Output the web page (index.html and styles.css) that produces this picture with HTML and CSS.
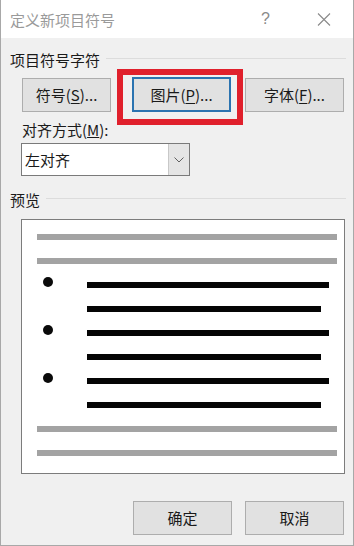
FILE: index.html
```html
<!DOCTYPE html>
<html lang="zh-CN">
<head>
    <meta charset="UTF-8">
    <meta name="viewport" content="width=device-width, initial-scale=1.0">
    <title>定义新项目符号</title>
    <link rel="stylesheet" href="styles.css">
</head>
<body>

<div class="dialog">
    <div class="title-bar">
        <span class="title">定义新项目符号</span>
        <span class="help">?</span>
        <svg class="close" width="14" height="13" viewBox="0 0 14 13">
            <path d="M1 0.5 L13 12.5 M13 0.5 L1 12.5" stroke="#8a8a8a" stroke-width="1.1" fill="none"/>
        </svg>
    </div>

    <div class="content">
        <div class="group-title">
            <span>项目符号字符</span>
            <span class="rule"></span>
        </div>

        <div class="button-row">
            <button class="btn btn-symbol">符号(<u>S</u>)...</button>
            <div class="highlight-wrap">
                <button class="btn btn-picture">图片(<u>P</u>)...</button>
                <!-- red annotation frame -->
                <div class="highlight"></div>
            </div>
            <button class="btn btn-font">字体(<u>F</u>)...</button>
        </div>

        <div class="field-label">对齐方式(<u>M</u>):</div>
        <div class="select">
            <span class="select-value">左对齐</span>
            <span class="select-arrow">
                <svg width="10" height="6" viewBox="0 0 10 6">
                    <path d="M0.5 0.5 L5 5 L9.5 0.5" stroke="#606060" stroke-width="1" fill="none"/>
                </svg>
            </span>
        </div>

        <div class="group-title preview-title">
            <span>预览</span>
            <span class="rule"></span>
        </div>

        <div class="preview">
            <div class="bar gray"></div>
            <div class="bar gray"></div>
            <div class="item"><span class="dot"></span><div class="bar black long"></div></div>
            <div class="item"><div class="bar black short"></div></div>
            <div class="item"><span class="dot"></span><div class="bar black long"></div></div>
            <div class="item"><div class="bar black short"></div></div>
            <div class="item"><span class="dot"></span><div class="bar black long"></div></div>
            <div class="item"><div class="bar black short"></div></div>
            <div class="bar gray"></div>
            <div class="bar gray"></div>
        </div>

        <div class="footer">
            <button class="btn btn-ok">确定</button>
            <button class="btn btn-cancel">取消</button>
        </div>
    </div>
</div>

</body>
</html>
```

FILE: styles.css
```css
body {
    margin: 0;
    padding: 0;
    background-color: #f0f0f0;
    font-family: "Noto Sans CJK SC", "Liberation Sans", sans-serif;
}

.dialog {
    width: 354px;
    height: 546px;
    box-sizing: border-box;
    border: 1px solid #a8a8a8;
    border-top: none;
    background-color: #f0f0f0;
}

.title-bar {
    height: 38px;
    background-color: white;
    display: flex;
    align-items: center;
    padding-left: 9px;
}

.title {
    font-size: 15px;
    color: #9a9a9a;
    flex: 1;
}

.help {
    font-size: 16px;
    color: #8a8a8a;
    margin-right: 47px;
    font-family: "Liberation Sans", sans-serif;
}

.close {
    margin-right: 22px;
}

.content {
    padding: 0 7px 0 9px;
    color: #1a1a1a;
    font-size: 15px;
}

.group-title {
    display: flex;
    align-items: center;
    height: 20px;
    line-height: 20px;
    margin-top: 12px;
}

.group-title .rule {
    flex: 1;
    height: 1px;
    background-color: #dcdcdc;
    margin-left: 6px;
    margin-top: -3px;
}

.button-row {
    display: flex;
    margin-top: 8px;
    padding-left: 12px;
}

.btn {
    font-family: inherit;
    font-size: 15px;
    color: #1a1a1a;
    background-color: #e1e1e1;
    border: 1px solid #adadad;
    height: 34px;
    padding: 0;
    line-height: 20px;
}

.btn u {
    text-decoration-thickness: 1px;
    text-underline-offset: 2px;
}

.btn-symbol {
    width: 89px;
}

.highlight-wrap {
    position: relative;
    margin-left: 21px;
}

.btn-picture {
    width: 99px;
    height: 35px;
    border: 2px solid #2b73b0;
    margin-top: -1px;
}

.highlight {
    position: absolute;
    left: -15px;
    right: -12px;
    top: -9px;
    bottom: -13px;
    border: 6px solid #e0202c;
}

.btn-font {
    width: 99px;
    margin-left: 14px;
}

.field-label {
    margin-top: 8px;
    padding-left: 12px;
    height: 20px;
    line-height: 20px;
}

.field-label u,
.btn u {
    text-decoration-thickness: 1px;
}

.select {
    margin-top: 3px;
    margin-left: 11px;
    width: 169px;
    height: 33px;
    box-sizing: border-box;
    border: 1px solid #7a7a7a;
    background-color: white;
    display: flex;
}

.select-value {
    flex: 1;
    padding-left: 3px;
    line-height: 31px;
}

.select-arrow {
    width: 20px;
    background-color: #e5e5e5;
    border-left: 1px solid #c8c8c8;
    display: flex;
    align-items: center;
    justify-content: center;
}

.preview-title {
    margin-top: 14px;
}

.preview {
    margin-top: 9px;
    margin-left: 11px;
    width: 324px;
    height: 255px;
    box-sizing: border-box;
    border: 1px solid #7c7c7c;
    background-color: white;
    padding-top: 14px;
    display: flex;
    flex-direction: column;
    gap: 18px;
}

.bar {
    height: 6px;
}

.bar.gray {
    background-color: #a3a3a3;
    margin-left: 15px;
    width: 300px;
}

.item {
    display: flex;
    align-items: flex-start;
    height: 6px;
    padding-left: 65px;
    position: relative;
}

.dot {
    width: 10px;
    height: 10px;
    border-radius: 50%;
    background-color: #0a0a0a;
    margin-left: -44px;
    margin-right: 34px;
    margin-top: -5px;
    flex-shrink: 0;
}

.bar.black {
    background-color: #050505;
}

.bar.long {
    width: 242px;
}

.bar.short {
    width: 234px;
}

.footer {
    display: flex;
    justify-content: flex-end;
    gap: 13px;
    margin-top: 27px;
    margin-right: 2px;
}

.btn-ok,
.btn-cancel {
    width: 99px;
    height: 34px;
}
```
